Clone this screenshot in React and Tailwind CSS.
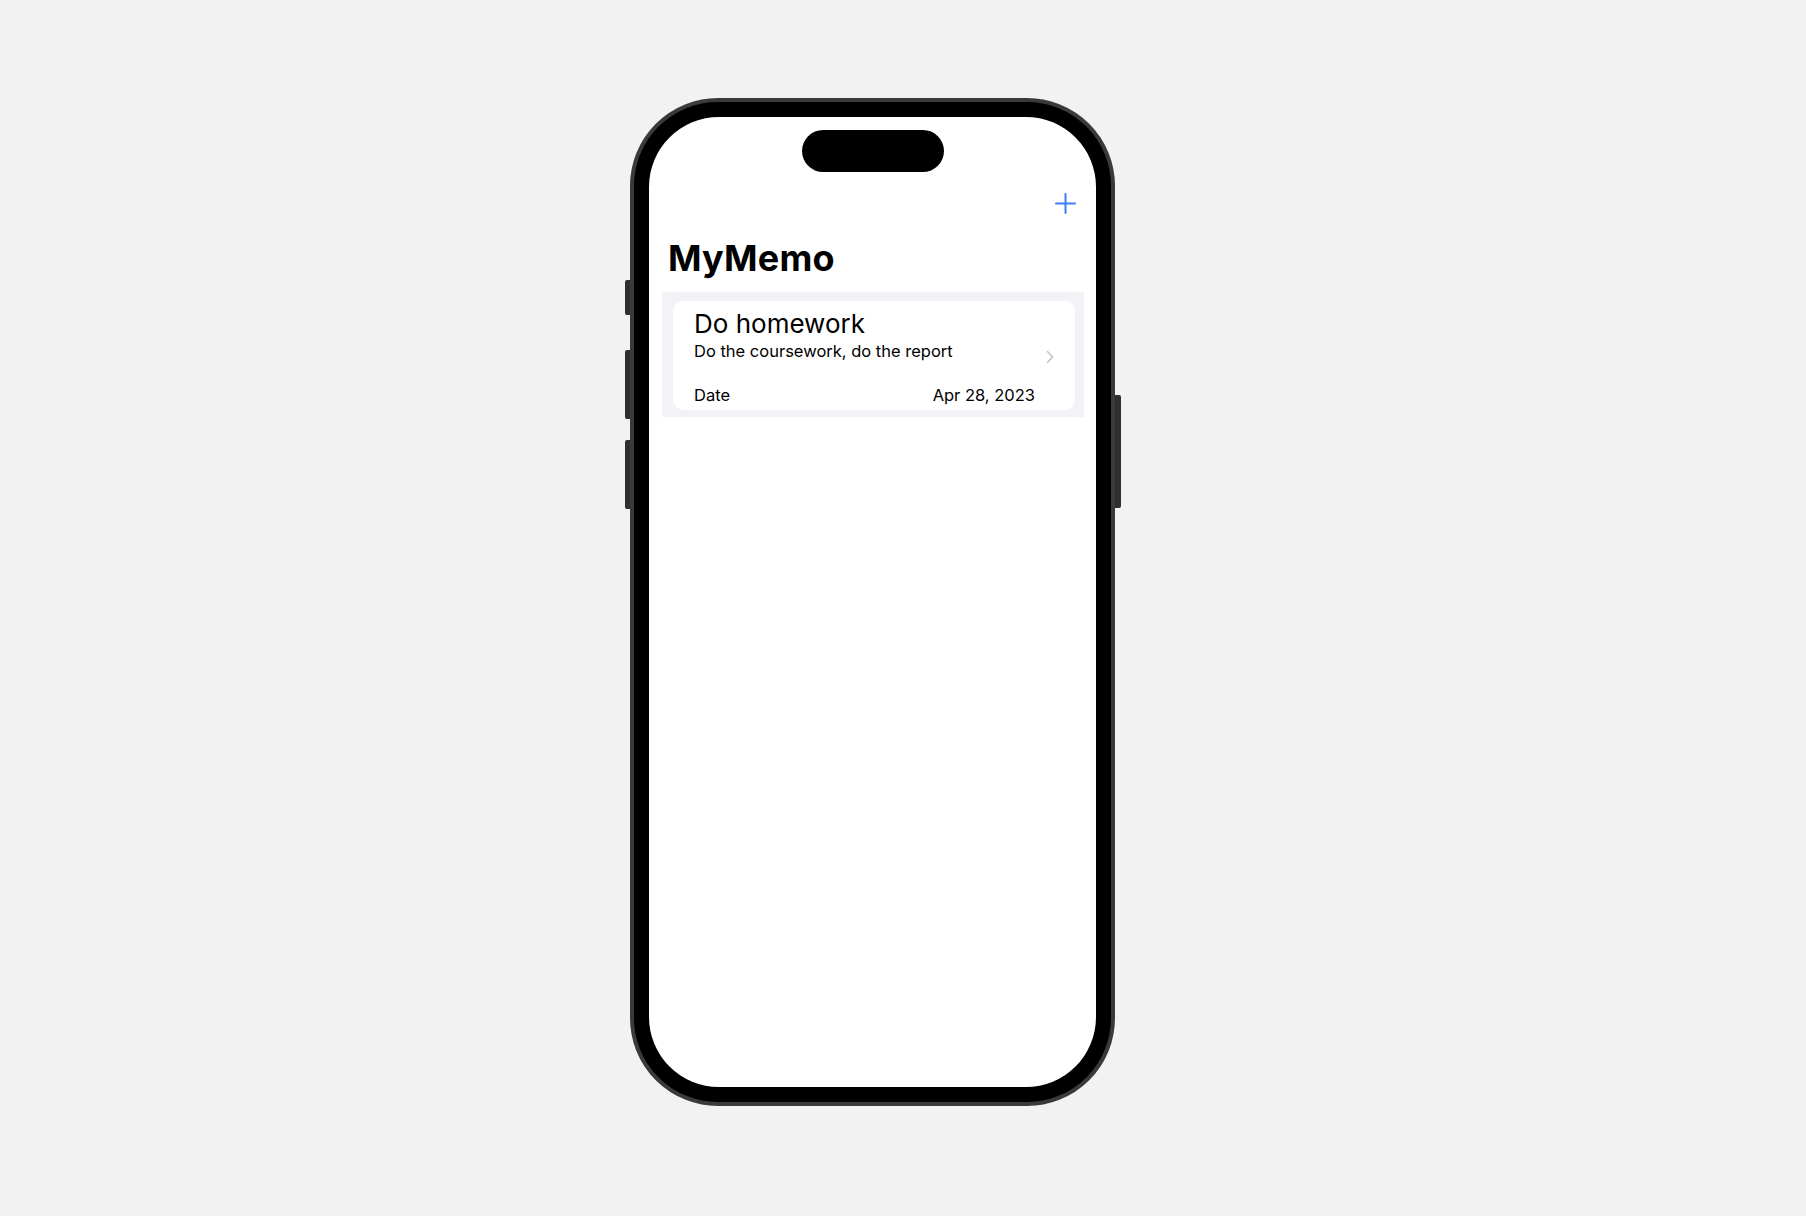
// App.jsx
export default function App() {
  return (
    <div className="h-[1216px] w-full bg-[#f2f2f2] pt-[98px] pl-[630px] font-['Inter','Liberation_Sans',sans-serif]">
      <div className="relative w-[485px] h-[1008px]">
        {/* side buttons */}
        <div className="absolute left-[-5px] top-[182px] w-[7px] h-[35px] rounded-l-[2px] bg-[#2f2f2f]" />
        <div className="absolute left-[-5px] top-[252px] w-[7px] h-[69px] rounded-l-[2px] bg-[#2f2f2f]" />
        <div className="absolute left-[-5px] top-[342px] w-[7px] h-[69px] rounded-l-[2px] bg-[#2f2f2f]" />
        <div className="absolute right-[-6px] top-[297px] w-[8px] h-[113px] rounded-r-[2px] bg-[#2f2f2f]" />

        <div className="relative h-full w-full rounded-[88px] border-[4px] border-[#3a3a3a] bg-black p-[15px]">
          <div className="h-full w-full rounded-[70px] bg-white overflow-hidden flex flex-col">
            {/* dynamic island */}
            <div className="mt-[13px] mx-auto h-[42px] w-[142px] rounded-full bg-black" />

            {/* nav */}
            <div className="mt-[21px] h-[21px] flex justify-end pr-[20px]">
              <svg width="21" height="21" viewBox="0 0 21 21">
                <path d="M10.5 1v19M1 10.5h19" stroke="#3a7ff6" strokeWidth="2" strokeLinecap="round" />
              </svg>
            </div>

            <h1 className="mt-[22px] pl-[19px] text-[36px] leading-[44px] font-bold tracking-[0.2px] text-black">
              MyMemo
            </h1>

            {/* list */}
            <div className="mt-[12px] ml-[13px] mr-[12px] bg-[#f2f2f7] pl-[11px] pr-[9px] pt-[9px] pb-[7px]">
              <div className="rounded-[10px] bg-white pl-[21px] pr-[21px] pt-[7px] pb-[4px] flex items-center">
                <div className="flex-1 pr-[11px]">
                  <div className="text-[26px] leading-[32px] text-black">Do homework</div>
                  <div className="text-[16.5px] leading-[22px] text-black">Do the coursework, do the report</div>
                  <div className="mt-[22px] flex justify-between text-[16.5px] leading-[22px] text-black">
                    <span>Date</span>
                    <span>Apr 28, 2023</span>
                  </div>
                </div>
                <svg width="8" height="14" viewBox="0 0 8 14" className="shrink-0">
                  <path d="M1.5 1.5l5 5.5-5 5.5" fill="none" stroke="#c4c4c8" strokeWidth="1.6" strokeLinecap="round" strokeLinejoin="round" />
                </svg>
              </div>
            </div>
          </div>
        </div>
      </div>
    </div>
  );
}
